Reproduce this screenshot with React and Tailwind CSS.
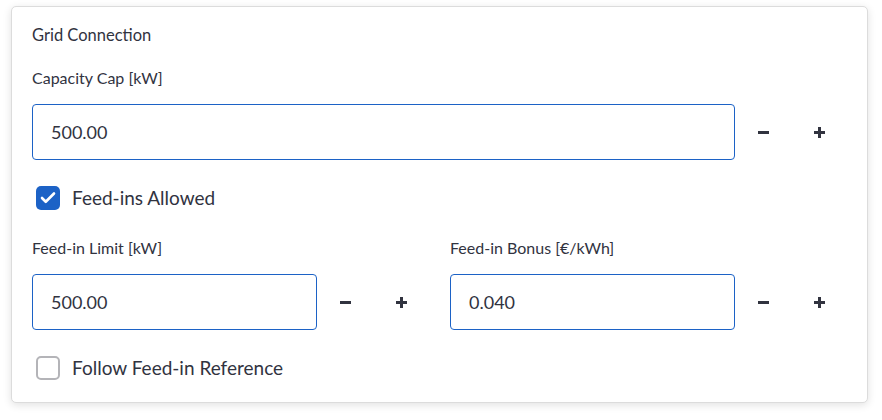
import { Check } from "lucide-react";

const font = { fontFamily: "Lato, 'Noto Sans', sans-serif" };

const NumberInput = ({ value }) => (
  <div className="flex h-[56px]">
    <div className="flex-1 flex items-center rounded-[4px] border border-[#1c62c6] px-[18px] text-[18px] text-[#31333f]">
      {value}
    </div>
    <button className="w-[56px] flex items-center justify-center">
      <span className="block w-[11px] h-[3px] bg-[#31333f]" />
    </button>
    <button className="w-[56px] flex items-center justify-center relative">
      <span className="block w-[11px] h-[3px] bg-[#31333f]" />
      <span className="absolute block w-[3px] h-[11px] bg-[#31333f]" />
    </button>
  </div>
);

const Checkbox = ({ checked, label }) => (
  <label className="flex items-center h-[24px] pl-[4px]">
    {checked ? (
      <span className="w-[24px] h-[24px] rounded-[5px] bg-[#1c62c6] flex items-center justify-center">
        <Check size={18} strokeWidth={3.5} color="white" />
      </span>
    ) : (
      <span className="w-[24px] h-[24px] rounded-[5px] border-2 border-[#b4b4b8] bg-white" />
    )}
    <span className="ml-[12px] text-[19px] text-[#31333f]">{label}</span>
  </label>
);

export default function App() {
  return (
    <div className="w-[882px] h-[420px] bg-white pt-[6px] pl-[11px]" style={font}>
      <div className="w-[857px] rounded-[5px] border border-[#dcdcdc] shadow-[0_2px_8px_rgba(0,0,0,0.12)] bg-white px-[20px] pt-[16px] pb-[22px]">
        <div className="text-[16.5px] text-[#31333f] leading-[24px]">Grid Connection</div>
        <div className="mt-[19px] text-[16px] text-[#31333f] leading-[24px]">Capacity Cap [kW]</div>
        <div className="mt-[14px]">
          <NumberInput value="500.00" />
        </div>
        <div className="mt-[26px]">
          <Checkbox checked label="Feed-ins Allowed" />
        </div>
        <div className="mt-[26px] grid grid-cols-2 gap-[21px]">
          <div>
            <div className="text-[16px] text-[#31333f] leading-[24px]">Feed-in Limit [kW]</div>
            <div className="mt-[14px]">
              <NumberInput value="500.00" />
            </div>
          </div>
          <div>
            <div className="text-[16px] text-[#31333f] leading-[24px]">Feed-in Bonus [€/kWh]</div>
            <div className="mt-[14px]">
              <NumberInput value="0.040" />
            </div>
          </div>
        </div>
        <div className="mt-[26px]">
          <Checkbox label="Follow Feed-in Reference" />
        </div>
      </div>
    </div>
  );
}
